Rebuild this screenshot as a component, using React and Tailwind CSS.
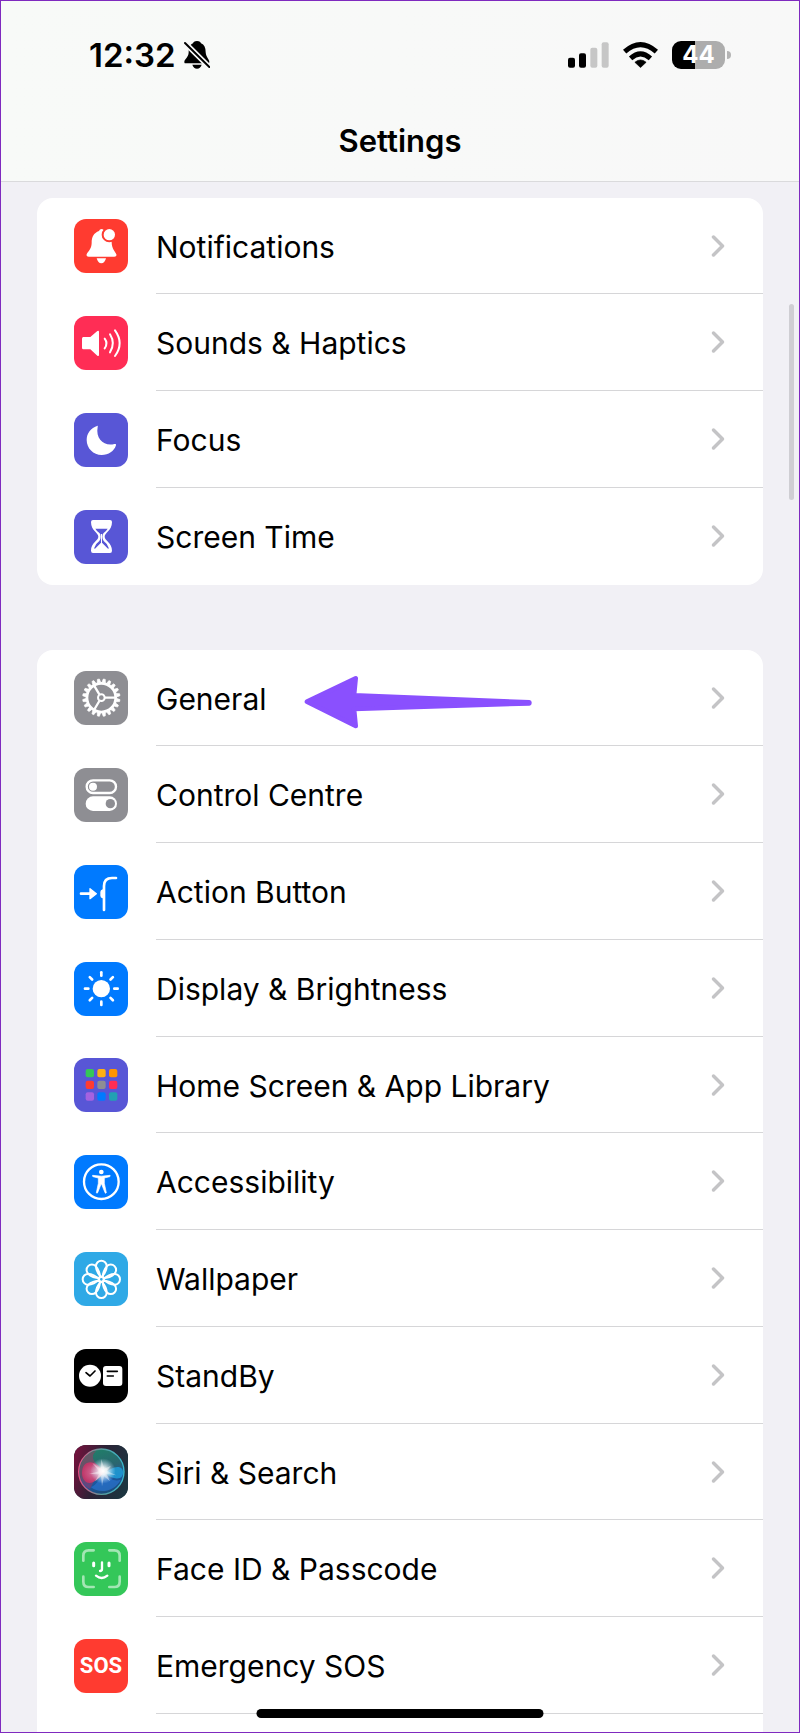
import React from "react";

function Bell() {
  return (
    <>
      <path fill="#fff" d="M83 30q-6 0-8 6C59 42 53 54 53 72c0 18-12 26-15 34q-2 7 6 7h77q8 0 6-7c-3-8-14-16-14-36 0-20-8-29-22-34q-2-6-8-6Z" />
      <path fill="#fff" d="M68 118h28q-4 15-14 15t-14-15Z" />
      <circle cx="106" cy="47" r="23" fill="#ff3b30" />
      <circle cx="106" cy="47" r="17" fill="#fff" />
    </>
  );
}

function Speaker() {
  return (
    <>
      <path fill="#fff" d="M28 63h21l21-18q5-3 5 3v68q0 6-5 3l-21-19H28q-4 0-4-5V68q0-5 4-5Z" />
      <g fill="none" stroke="#fff" strokeWidth="6" strokeLinecap="round">
        <path d="M92 68q11 14 0 29" />
        <path d="M108 55q17 27 0 54" />
        <path d="M123 43q28 39 0 77" />
      </g>
    </>
  );
}

function Moon() {
  return (
    <path fill="#fff" d="M71 38C50 44 38 61 38 81c0 25 20 45 45 45 21 0 37-11 43-29 1-4-2-5-5-4C92 101 64 79 71 42q1-5 0-4Z" />
  );
}

function Hourglass() {
  return (
    <>
      <path fill="#fff" d="M57 30h51q6 0 6 6c0 26-22 32-22 44s22 18 22 42q0 7-6 7H57q-6 0-6-7c0-24 22-30 22-42S51 62 51 36q0-6 6-6Z" />
      <path fill="#5856d6" d="M64 56h37q-4 7-12 13-4 4-4 11t4 13q11 8 15 20 1 4-2 3L84 98V72h-3v26l-18 18q-3 1-2-3 4-12 15-20 4-4 4-13t-4-11q-8-6-12-13Z" />
    </>
  );
}

const TEETH = Array.from({ length: 20 }, (_, i) => i * 18);

function Gear() {
  return (
    <g transform="translate(82 80)" fill="none" stroke="#fff">
      <circle r="43" strokeWidth="8" />
      {TEETH.map((a) => (
        <path key={a} d="M46-5 56-3V3L46 5Z" fill="#fff" strokeWidth="2" strokeLinejoin="round" transform={`rotate(${a + 9})`} />
      ))}
      <circle r="10" strokeWidth="6" />
      <path d="M11 0H42M-6-10-22-37M-6 10-22 37" strokeWidth="7" />
    </g>
  );
}

function Toggles() {
  return (
    <>
      <rect x="38" y="37" width="88" height="38" rx="19" fill="none" stroke="#fff" strokeWidth="7" />
      <circle cx="57" cy="56" r="12" fill="#fff" />
      <rect x="35" y="85" width="94" height="44" rx="22" fill="#fff" />
      <circle cx="109" cy="107" r="14" fill="#8e8e93" />
    </>
  );
}

function ActionButton() {
  return (
    <>
      <path d="M21 86h28M126 39h-12q-24 0-24 24v72" fill="none" stroke="#fff" strokeWidth="8" strokeLinecap="round" />
      <path fill="#fff" stroke="#fff" strokeWidth="4" strokeLinejoin="round" d="M48 71v30l19-15Z" />
      <path fill="#fff" d="M90 73h-4q-7 2-7 8v11q0 6 7 8h4Z" />
    </>
  );
}

const OCTANTS = [0, 45, 90, 135, 180, 225, 270, 315];

function Sun() {
  return (
    <g transform="translate(82 80)">
      <circle r="26" fill="#fff" />
      {OCTANTS.map((a) => (
        <path key={a} d="M39 0h10" stroke="#fff" strokeWidth="8" strokeLinecap="round" transform={`rotate(${a})`} />
      ))}
    </g>
  );
}

const TILES = ["#34c759", "#ffb012", "#ff9500", "#ff3b30", "#8e8e93", "#ff2d55", "#a562e0", "#007aff", "#22a1b3"];

function AppGrid() {
  return TILES.map((c, i) => (
    <rect key={c} x={35 + (i % 3) * 35} y={33 + Math.floor(i / 3) * 35} width="25" height="25" rx="6" fill={c} />
  ));
}

function Accessibility() {
  return (
    <>
      <circle cx="82" cy="80" r="52" fill="none" stroke="#fff" strokeWidth="7" />
      <circle cx="82" cy="51" r="7" fill="#fff" />
      <path fill="#fff" stroke="#fff" strokeWidth="2" strokeLinejoin="round" d="M56 61q26 5 52 0 2 3-1 4l-16 4v16l6 28q-2 3-4 0L83 88h-2l-10 25q-2 3-4 0l6-28V69l-16-4q-3-1-1-4Z" />
    </>
  );
}

function Flower() {
  return (
    <g transform="translate(82 82)" fill="none" stroke="#fff" strokeWidth="6">
      {OCTANTS.map((a) => (
        <path key={a} d="M0-6C-10-16-16-28-16-40a16 16 0 0 1 32 0C16-28 10-16 0-6Z" transform={`rotate(${a})`} />
      ))}
      <circle r="6" fill="#2fa9e6" strokeWidth="4" />
    </g>
  );
}

function StandBy() {
  return (
    <>
      <circle cx="48" cy="80" r="33" fill="#fff" />
      <rect x="87" y="51" width="58" height="60" rx="9" fill="#fff" />
      <path d="m36 71 12 10 15-15M100 67h30M100 81h18" fill="none" stroke="#000" strokeWidth="5" strokeLinecap="round" strokeLinejoin="round" />
    </>
  );
}

function Siri() {
  return (
    <>
      <defs>
        <linearGradient id="siriBg" x1="0" x2="1" y1="0.3" y2="0.6">
          <stop offset="0" stopColor="#70123c" />
          <stop offset="0.45" stopColor="#2c2236" />
          <stop offset="1" stopColor="#1c3540" />
        </linearGradient>
        <linearGradient id="siriOrb" x1="0.3" x2="0.6" y1="0" y2="1">
          <stop offset="0" stopColor="#1f8068" />
          <stop offset="0.45" stopColor="#2b6570" />
          <stop offset="0.7" stopColor="#1c58a0" />
          <stop offset="1" stopColor="#1c4c78" />
        </linearGradient>
        <linearGradient id="siriRim">
          <stop offset="0" stopColor="#e84a80" />
          <stop offset="0.5" stopColor="#5a9c9c" />
          <stop offset="1" stopColor="#37b9cf" />
        </linearGradient>
        <radialGradient id="siriPink">
          <stop offset="0" stopColor="#e0709c" />
          <stop offset="1" stopColor="#c83468" />
        </radialGradient>
        <radialGradient id="siriGlow">
          <stop offset="0" stopColor="#fff" />
          <stop offset="0.3" stopColor="#fff" stopOpacity="0.85" />
          <stop offset="1" stopColor="#bfe8ff" stopOpacity="0" />
        </radialGradient>
      </defs>
      <rect width="162" height="162" fill="url(#siriBg)" />
      <circle cx="82" cy="80" r="68" fill="url(#siriOrb)" stroke="url(#siriRim)" strokeWidth="4" />
      <path fill="#a83462" opacity="0.5" d="M17 80C18 46 40 22 66 18 46 36 60 54 88 76 66 90 60 112 48 132 28 122 17 100 17 80Z" />
      <path fill="url(#siriPink)" opacity="0.9" d="M24 84C24 58 42 46 60 54 74 60 82 72 94 80 78 92 66 112 48 114 34 115 24 100 24 84Z" />
      <path fill="#1f9bd6" opacity="0.85" d="M92 82C108 74 120 64 134 66 148 68 150 84 144 94 136 106 110 102 92 82Z" />
      <path fill="#2a73cf" opacity="0.7" d="M90 84C106 104 124 110 140 104 122 140 76 148 50 126 70 122 76 96 90 84Z" />
      <circle cx="87" cy="78" r="38" fill="url(#siriGlow)" />
      <path fill="#fff" opacity="0.4" d="m82 42 9 29 20-9-12 16 28 13-29-4 10 22-18-15-6 30-3-30-18 15 12-21-30-1 30-8-20-25 25 17Z" />
    </>
  );
}

function FaceId() {
  return (
    <g fill="none" stroke="#fff" strokeLinecap="round">
      <path opacity="0.55" strokeWidth="8" d="M28 56V41q0-16 16-16h15M106 25h15q16 0 16 16v15M28 104v15q0 16 16 16h15M106 135h15q16 0 16-16v-15" />
      <path strokeWidth="9" d="M59 63v8M105 63v8" />
      <path strokeWidth="7" d="M84 61v20q0 6-6 6" />
      <path strokeWidth="7" d="M66 101q17 14 34 0" />
    </g>
  );
}

function AppIcon({ tile, children }) {
  return (
    <span className={`flex size-[54px] shrink-0 items-center justify-center overflow-hidden rounded-xl ${tile}`}>
      {children}
    </span>
  );
}

const ATTENTION = [
  { label: "Notifications", tile: "bg-[#ff3b30]", Glyph: Bell },
  { label: "Sounds & Haptics", tile: "bg-[#ff2d55]", Glyph: Speaker },
  { label: "Focus", tile: "bg-[#5856d6]", Glyph: Moon },
  { label: "Screen Time", tile: "bg-[#5856d6]", Glyph: Hourglass },
];

const DEVICE = [
  { label: "General", tile: "bg-[#8e8e93]", Glyph: Gear, pointed: true },
  { label: "Control Centre", tile: "bg-[#8e8e93]", Glyph: Toggles },
  { label: "Action Button", tile: "bg-[#007aff]", Glyph: ActionButton },
  { label: "Display & Brightness", tile: "bg-[#007aff]", Glyph: Sun },
  { label: "Home Screen & App Library", tile: "bg-[#5856d6]", Glyph: AppGrid },
  { label: "Accessibility", tile: "bg-[#007aff]", Glyph: Accessibility },
  { label: "Wallpaper", tile: "bg-[#2fa9e6]", Glyph: Flower },
  { label: "StandBy", tile: "bg-black", Glyph: StandBy },
  { label: "Siri & Search", tile: "bg-[#1c3540]", Glyph: Siri },
  { label: "Face ID & Passcode", tile: "bg-[#34c759]", Glyph: FaceId },
  { label: "Emergency SOS", tile: "bg-[#ff3b30]" },
];

function PointerArrow() {
  return (
    <svg className="absolute top-[25px] left-[267px] h-[54px] w-[229px]" viewBox="0 0 687 162" aria-hidden="true">
      <path
        fill="#8a50fe"
        stroke="#8a50fe"
        strokeWidth="14"
        strokeLinejoin="round"
        d="M9 80 155 10 150 61 676 82v3L150 102l5 51Z"
      />
    </svg>
  );
}

function Row({ label, tile, Glyph, pointed, divided }) {
  return (
    <li className="relative h-[97px] nth-[4n+1]:h-24">
      <a href="#" className="flex h-full items-center pl-[37px]">
        <AppIcon tile={tile}>
          {Glyph ? (
            <svg viewBox="0 0 162 162" className="size-full" aria-hidden="true">
              <Glyph />
            </svg>
          ) : (
            <span className="font-['Roboto',sans-serif] text-[22px] font-bold text-white">SOS</span>
          )}
        </AppIcon>
        <span className={`ml-7 flex h-full min-w-0 flex-1 items-center justify-between border-b pr-[38px] ${divided ? "border-[#d6d6d8]" : "border-transparent"}`}>
          <span className="truncate pt-0.5">{label}</span>
          <svg viewBox="0 0 14 24" className="h-6 w-3.5 shrink-0" fill="none" stroke="#c4c4c6" strokeWidth="3.5" strokeLinecap="round" strokeLinejoin="round" aria-hidden="true">
            <path d="m2.5 3 9 9-9 9" />
          </svg>
        </span>
      </a>
      {pointed && <PointerArrow />}
    </li>
  );
}

function StatusBar() {
  return (
    <div className="flex items-center justify-between pt-8 pr-[68px] pl-[88px]">
      <div className="flex items-center gap-2">
        <span className="text-[33px] leading-11 font-semibold">12:32</span>
        <svg viewBox="0 0 78 84" className="h-7 w-[26px]" aria-label="Silent mode" role="img">
          <path d="M39 0c-8 0-11 4-12 7C15 12 14 24 14 34c0 16-13 20-13 29 0 4 2 4 5 4h65c3 0 5-1 5-4 0-9-10-13-11-29 0-14-4-23-14-27-1-3-4-7-12-7Z" />
          <path d="M25 71h28q-4 12-14 12t-14-12Z" />
          <path d="m3 6 73 72" stroke="#f8f8f8" strokeWidth="16" />
          <path d="m3 6 73 72" stroke="#000" strokeWidth="6" strokeLinecap="round" />
        </svg>
      </div>
      <div className="flex items-center gap-3.5">
        <svg viewBox="0 0 123 78" className="h-[26px] w-[41px]" aria-label="Two bars of signal" role="img">
          <rect x="0" y="47" width="21" height="30" rx="6" />
          <rect x="33" y="34" width="21" height="43" rx="6" />
          <rect x="67" y="17" width="21" height="60" rx="6" fill="#c6c6c6" />
          <rect x="101" y="1" width="21" height="76" rx="6" fill="#c6c6c6" />
        </svg>
        <svg viewBox="0 0 106 78" className="h-[26px] w-[35px]" aria-label="Wi-Fi" role="img">
          <g fill="none" stroke="#000" strokeWidth="15">
            <path d="M5 29Q53-14 101 29" />
            <path d="M23 49Q53 22 83 49" />
          </g>
          <path d="M53 77 36 61Q53 47 70 61Z" stroke="#000" strokeWidth="2" strokeLinejoin="round" />
        </svg>
        <div className="flex items-center gap-0.5">
          <span className="flex h-7 w-[53px] items-center justify-center rounded-[9px] bg-linear-to-r from-black from-44% to-[#adadad] to-44% text-2xl font-bold text-white">
            44
          </span>
          <span className="h-2 w-1 rounded-r-full bg-[#b4b4b4]" />
        </div>
      </div>
    </div>
  );
}

export default function App() {
  return (
    <div className="relative flex h-screen flex-col overflow-hidden border border-[#7f2abf] bg-[#f1f0f5] font-['Inter','Liberation_Sans',sans-serif] text-[30px] leading-10 text-black">
      <header className="h-[181px] shrink-0 border-b border-[#dadadc] bg-linear-to-r from-[#f8faf8] to-[#f8f8f8]">
        <StatusBar />
        <h1 className="mt-11 text-center text-[31px] leading-10 font-semibold">Settings</h1>
      </header>
      <main className="flex min-h-0 flex-1 flex-col gap-[65px] px-9 pt-4">
        <ul className="shrink-0 rounded-2xl bg-white">
          {ATTENTION.map((item, i) => (
            <Row key={item.label} {...item} divided={i < ATTENTION.length - 1} />
          ))}
        </ul>
        <ul className="flex-1 rounded-t-2xl bg-white">
          {DEVICE.map((item) => (
            <Row key={item.label} {...item} divided />
          ))}
        </ul>
      </main>
      <div className="absolute top-[303px] right-[5px] h-[196px] w-[5px] rounded-full bg-[#cfced3]" />
      <div className="absolute bottom-3.5 left-1/2 h-[9px] w-[287px] -translate-x-1/2 rounded-full bg-black" />
    </div>
  );
}
